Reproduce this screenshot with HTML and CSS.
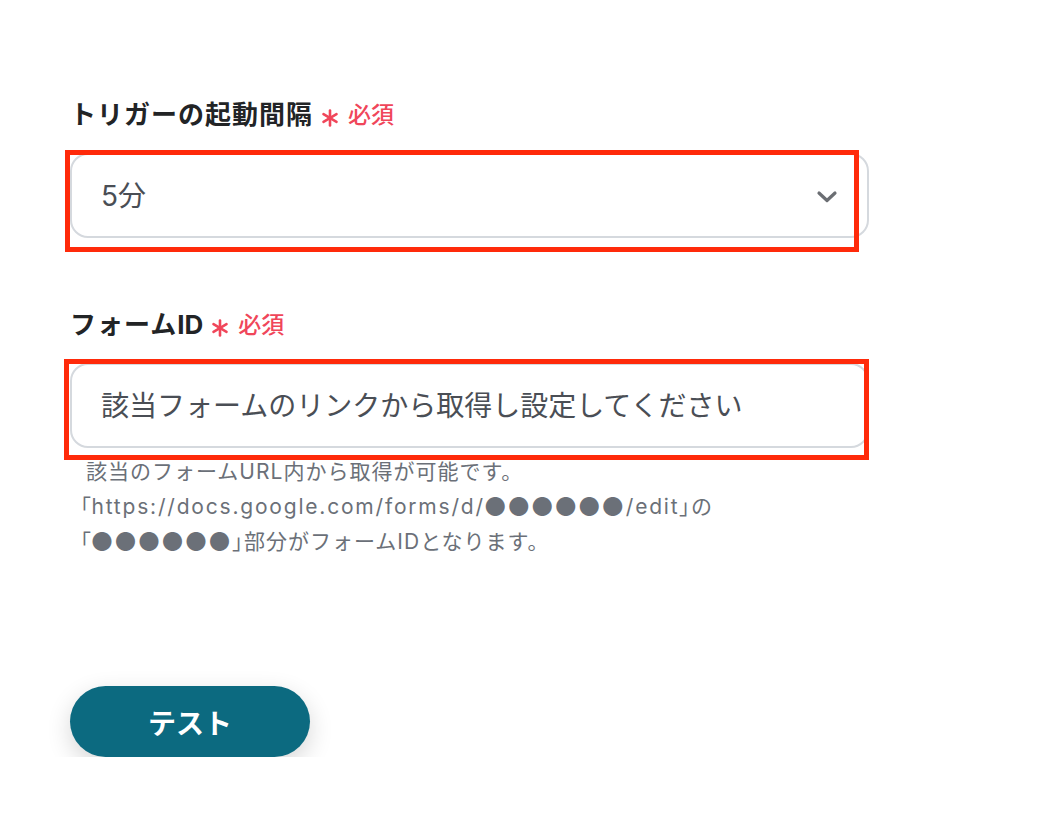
FILE: index.html
```html
<!DOCTYPE html>
<html lang="ja">
<head>
<meta charset="utf-8">
<link rel="stylesheet" href="styles.css">
</head>
<body>
<main class="form">
  <section class="field first">
    <div class="label">
      <span class="label-text">トリガーの起動間隔</span>
      <svg class="req-star" viewBox="0 0 18 18" width="18" height="18"><g stroke="#f0465a" stroke-width="2.6" stroke-linecap="round"><line x1="9" y1="1.5" x2="9" y2="16.5"/><line x1="2.5" y1="5.2" x2="15.5" y2="12.8"/><line x1="2.5" y1="12.8" x2="15.5" y2="5.2"/></g></svg>
      <span class="req-text">必須</span>
    </div>
    <div class="control-wrap">
      <div class="control select">
        <span class="value">5分</span>
        <svg class="chevron" viewBox="0 0 22 13" width="22" height="13"><polyline points="3,3 11,10.5 19,3" fill="none" stroke="#6b6e73" stroke-width="3.2" stroke-linecap="round" stroke-linejoin="round"/></svg>
      </div>
      <div class="highlight hl-1"></div>
    </div>
  </section>

  <section class="field second">
    <div class="label">
      <span class="label-text">フォーム<span class="latin">ID</span></span>
      <svg class="req-star" viewBox="0 0 18 18" width="18" height="18"><g stroke="#f0465a" stroke-width="2.6" stroke-linecap="round"><line x1="9" y1="1.5" x2="9" y2="16.5"/><line x1="2.5" y1="5.2" x2="15.5" y2="12.8"/><line x1="2.5" y1="12.8" x2="15.5" y2="5.2"/></g></svg>
      <span class="req-text">必須</span>
    </div>
    <div class="control-wrap">
      <div class="control input">
        <span class="value">該当フォームのリンクから取得し設定してください</span>
      </div>
      <div class="highlight hl-2"></div>
    </div>
    <p class="help">該当のフォームURL内から取得が可能です。<br><span class="br open">「</span><span class="url">https://docs.google.com/forms/d/</span><span class="dots">●●●●●●</span><span class="url">/edit</span><span class="br">」</span>の<br><span class="br open">「</span><span class="dots">●●●●●●</span><span class="br">」</span>部分がフォームIDとなります。</p>
  </section>

  <div class="actions">
    <button class="test-btn" type="button">テスト</button>
  </div>
</main>
</body>
</html>
```

FILE: styles.css
```css
html, body {
  margin: 0;
  padding: 0;
  background: #ffffff;
}

body {
  font-family: Inter, "Noto Sans CJK JP", "Noto Sans", sans-serif;
  color: #222426;
}

.form {
  padding: 97px 0 0 70px;
  width: 799px;
}

.field.second {
  margin-top: 69px;
}

.label {
  display: flex;
  align-items: center;
  height: 36px;
}

.label-text {
  font-size: 26px;
  font-weight: 700;
  line-height: 36px;
  color: #222426;
  letter-spacing: 1px;
}

.label-text .latin {
  letter-spacing: 0;
}

.req-star {
  margin-left: 8px;
  margin-top: 5px;
  flex: none;
}

.req-text {
  margin-left: 9px;
  font-size: 23px;
  font-weight: 500;
  color: #f0465a;
  line-height: 36px;
}

.control-wrap {
  position: relative;
  margin-top: 20px;
}

.control {
  box-sizing: border-box;
  height: 85px;
  border: 2px solid #d5d9de;
  border-radius: 18px;
  display: flex;
  align-items: center;
  padding: 0 29px;
  background: #fff;
}

.select {
  justify-content: space-between;
  padding-right: 29px;
}

.value {
  font-size: 28px;
  color: #4a4e55;
  line-height: 36px;
}

.chevron {
  margin-top: 2px;
}

.highlight {
  position: absolute;
  border: 5px solid #ff2a0a;
  box-sizing: border-box;
  pointer-events: none;
}

.hl-1 {
  left: -5px;
  top: -3px;
  width: 794px;
  height: 102px;
}

.hl-2 {
  left: -6px;
  top: -4px;
  width: 805px;
  height: 101px;
}

.help {
  margin: 6px 0 0 16px;
  font-size: 21px;
  line-height: 35px;
  letter-spacing: 1px;
  color: #6b7078;
}

.help .br,
.help .dots {
  font-family: "Noto Sans CJK JP", sans-serif;
  line-height: 1;
}

.help .br {
  font-feature-settings: "palt";
}

.help .br.open {
  margin-left: -6px;
}

.help .dots {
  letter-spacing: 2.5px;
}

.help .url {
  letter-spacing: 1.8px;
}

.actions {
  margin-top: 127px;
}

.test-btn {
  width: 240px;
  height: 71px;
  border: none;
  border-radius: 36px;
  background: #0c6a80;
  color: #ffffff;
  font-family: Inter, "Noto Sans CJK JP", sans-serif;
  font-size: 28px;
  font-weight: 700;
  box-shadow: 0 8px 24px rgba(0, 0, 0, 0.16);
  cursor: pointer;
}
```
